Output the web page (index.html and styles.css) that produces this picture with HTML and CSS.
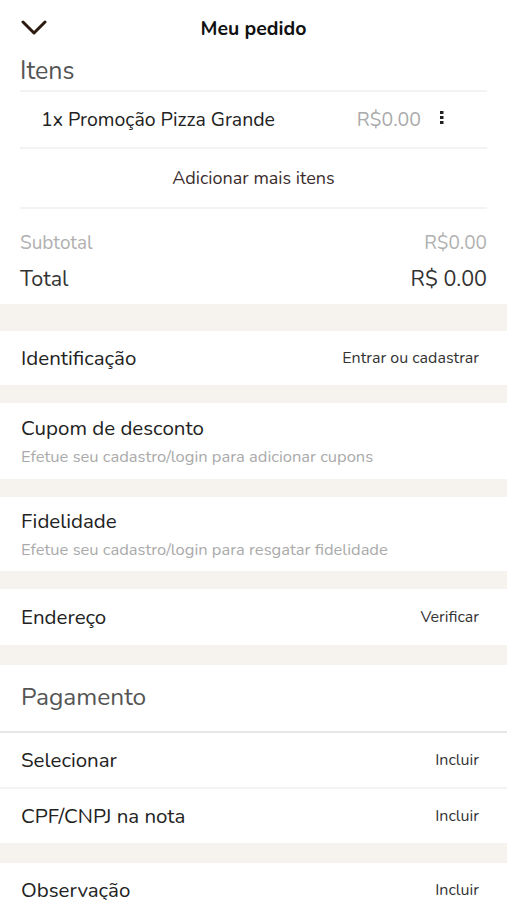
FILE: index.html
```html
<!DOCTYPE html>
<html>
    <head>
        <meta charset="utf-8">
        <title>Meu pedido</title>
        <link rel="stylesheet" href="styles.css">
    </head>
    <body>

        <header class="topbar">
            <svg class="back" width="26" height="16" viewBox="0 0 26 16">
                <path d="M2 2 L13 13 L24 2" fill="none" stroke="#2b1a10" stroke-width="3" stroke-linecap="round" stroke-linejoin="round"/>
            </svg>
            <h1>Meu pedido</h1>
        </header>

        <section class="items">
            <h2 class="section-title">Itens</h2>
            <div class="item">
                <span class="item-name">1x Promoção Pizza Grande</span>
                <span class="item-price">R$0.00</span>
                <svg class="dots" width="6" height="14" viewBox="0 0 6 14">
                    <rect x="1" y="0" width="3.5" height="3" fill="#222"/>
                    <rect x="1" y="5" width="3.5" height="3" fill="#222"/>
                    <rect x="1" y="10" width="3.5" height="3" fill="#222"/>
                </svg>
            </div>
            <div class="add-more">Adicionar mais itens</div>
            <div class="totals">
                <div class="subtotal"><span>Subtotal</span><span>R$0.00</span></div>
                <div class="total"><span>Total</span><span>R$ 0.00</span></div>
            </div>
        </section>

        <div class="gap gap-big"></div>

        <div class="row">
            <span class="row-title">Identificação</span>
            <span class="row-action">Entrar ou cadastrar</span>
        </div>

        <div class="gap"></div>

        <div class="row row-info">
            <span class="row-title">Cupom de desconto</span>
            <span class="row-sub">Efetue seu cadastro/login para adicionar cupons</span>
        </div>

        <div class="gap"></div>

        <div class="row row-info row-fid">
            <span class="row-title">Fidelidade</span>
            <span class="row-sub">Efetue seu cadastro/login para resgatar fidelidade</span>
        </div>

        <div class="gap"></div>

        <div class="row row-tall">
            <span class="row-title">Endereço</span>
            <span class="row-action">Verificar</span>
        </div>

        <div class="gap gap-mid"></div>

        <section class="payment">
            <h2 class="section-title pay-title">Pagamento</h2>
            <div class="row row-line">
                <span class="row-title">Selecionar</span>
                <span class="row-action">Incluir</span>
            </div>
            <div class="row">
                <span class="row-title">CPF/CNPJ na nota</span>
                <span class="row-action">Incluir</span>
            </div>
        </section>

        <div class="gap gap-mid"></div>

        <div class="row">
            <span class="row-title">Observação</span>
            <span class="row-action">Incluir</span>
        </div>

    </body>
</html>
```

FILE: styles.css
```css
body {
    margin: 0;
    background: #ffffff;
    font-family: "Nunito", "Lato", "Noto Sans", sans-serif;
    color: #222222;
}

.topbar {
    height: 56px;
    display: flex;
    align-items: center;
    justify-content: center;
    position: relative;
}

.topbar .back {
    position: absolute;
    left: 21px;
    top: 20px;
}

.topbar h1 {
    margin: 0;
    font-size: 19.5px;
    font-weight: 700;
    color: #111111;
}

.items {
    padding: 0 20px;
}

.section-title {
    margin: 0;
    font-size: 25px;
    font-weight: 400;
    color: #555555;
    height: 34px;
    line-height: 30px;
    border-bottom: 2px solid #f3f3f3;
}

.item {
    display: flex;
    align-items: center;
    height: 55px;
    padding: 0 42px 0 21px;
    border-bottom: 2px solid #f3f3f3;
    font-size: 19.5px;
}

.item-name {
    flex: 1;
    color: #222222;
}

.item-price {
    color: #aaaaaa;
    margin-right: 18px;
}

.dots {
    margin-top: -4px;
}

.add-more {
    height: 58px;
    line-height: 58px;
    text-align: center;
    font-size: 18px;
    color: #3b2d2d;
    border-bottom: 2px solid #f3f3f3;
}

.totals {
    padding: 20px 0 7px 0;
}

.subtotal, .total {
    display: flex;
    justify-content: space-between;
}

.subtotal {
    font-size: 19px;
    color: #b0b0b0;
    height: 28px;
    line-height: 28px;
}

.total {
    font-size: 21.5px;
    color: #333333;
    height: 40px;
    line-height: 44px;
}

.gap {
    height: 18px;
    background: #f6f2ee;
}

.gap-big {
    height: 27px;
}

.gap-mid {
    height: 20px;
}

.row {
    display: flex;
    align-items: center;
    justify-content: space-between;
    height: 54px;
    padding: 0 28px 0 21px;
}

.row-tall {
    height: 56px;
}

.row-title {
    font-size: 20.5px;
    color: #222222;
}

.row-action {
    font-size: 16px;
    color: #333333;
}

.row-info {
    flex-direction: column;
    align-items: flex-start;
    justify-content: center;
    height: 76px;
}

.row-fid {
    height: 74px;
}

.row-sub {
    margin-top: 3px;
    font-size: 16.5px;
    color: #aaaaaa;
}

.row-line {
    border-bottom: 2px solid #f3f3f3;
}

.payment .row {
    height: 54px;
}

.pay-title {
    height: 66px;
    line-height: 64px;
    font-size: 24.5px;
    padding-left: 21px;
    border-bottom: 2px solid #e6e6e6;
}
```
